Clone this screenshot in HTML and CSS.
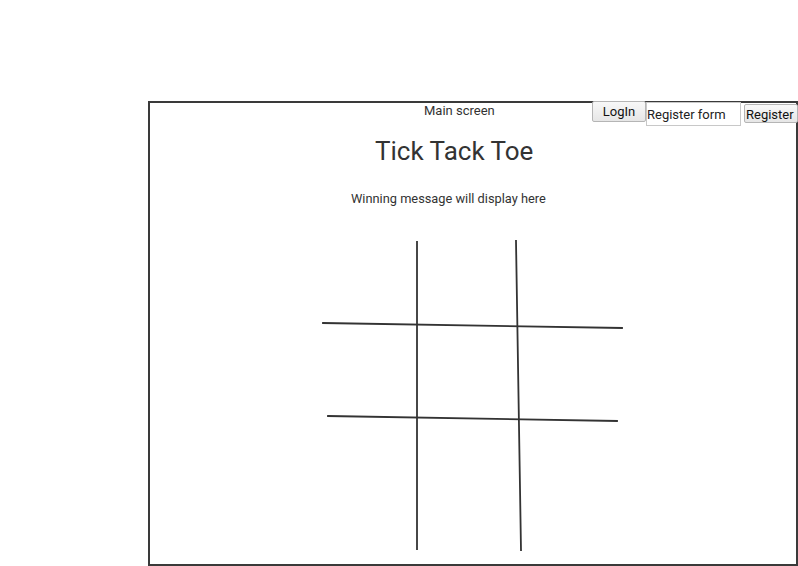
FILE: index.html
```html
<!DOCTYPE html>
<html>
<head>
<meta charset="utf-8">
<link rel="stylesheet" href="styles.css">
</head>
<body>
<div class="page">
  <div class="frame">
    <div class="title-small">Main screen</div>
    <h1 class="title">Tick Tack Toe</h1>
    <div class="message">Winning message will display here</div>
    <svg class="board" width="310" height="316" viewBox="0 0 310 316">
      <g stroke="#333" stroke-width="1.8" stroke-linecap="square" fill="none">
        <line x1="97" y1="4" x2="97" y2="311"/>
        <line x1="196" y1="3" x2="201" y2="312"/>
        <line x1="3" y1="85" x2="302" y2="90"/>
        <line x1="8" y1="178" x2="297" y2="183"/>
      </g>
    </svg>
    <div class="toolbar">
      <button class="btn btn-login">LogIn</button>
      <input class="field" type="text" value="Register form">
      <button class="btn btn-register">Register</button>
    </div>
  </div>
</div>
</body>
</html>
```

FILE: styles.css
```css
html, body {
  margin: 0;
  padding: 0;
  background: #fff;
}
body {
  font-family: Roboto, "Liberation Sans", sans-serif;
  color: #333;
  width: 798px;
  height: 566px;
  overflow: hidden;
}
.page {
  padding-top: 101px;
  padding-left: 148px;
}
.frame {
  position: relative;
  box-sizing: border-box;
  width: 650px;
  height: 465px;
  border: 2px solid #3a3a3a;
  display: flex;
  flex-direction: column;
  align-items: flex-start;
}
.title-small {
  font-size: 13px;
  line-height: 16px;
  margin-left: 274px;
  margin-top: 0px;
}
.title {
  font-size: 26px;
  font-weight: 400;
  line-height: 30px;
  margin: 17px 0 0 225px;
}
.message {
  font-size: 12.8px;
  line-height: 16px;
  margin: 25px 0 0 201px;
}
.board {
  display: block;
  margin: 31px 0 0 170px;
}
.toolbar {
  position: absolute;
  top: -2px;
  right: -2px;
  display: flex;
  align-items: flex-start;
}
.btn {
  font-family: Roboto, "Liberation Sans", sans-serif;
  font-size: 13px;
  color: #111;
  background: linear-gradient(#f8f8f8, #e6e6e6);
  border: 1px solid #b5b5b5;
  border-radius: 2px;
  padding: 0;
  height: 21px;
  line-height: 19px;
}
.btn-login {
  width: 54px;
}
.field {
  box-sizing: border-box;
  width: 95px;
  height: 24px;
  margin: 1px 0 0 0;
  padding: 0 0 0 0;
  border: 1px solid #c8c8c8;
  font-family: Roboto, "Liberation Sans", sans-serif;
  font-size: 13px;
  color: #222;
  background: #fff;
  outline: none;
}
.btn-register {
  width: 54px;
  height: 19px;
  margin: 3px 0 0 3px;
  line-height: 19px;
  text-align: left;
  padding-left: 1px;
}
```
